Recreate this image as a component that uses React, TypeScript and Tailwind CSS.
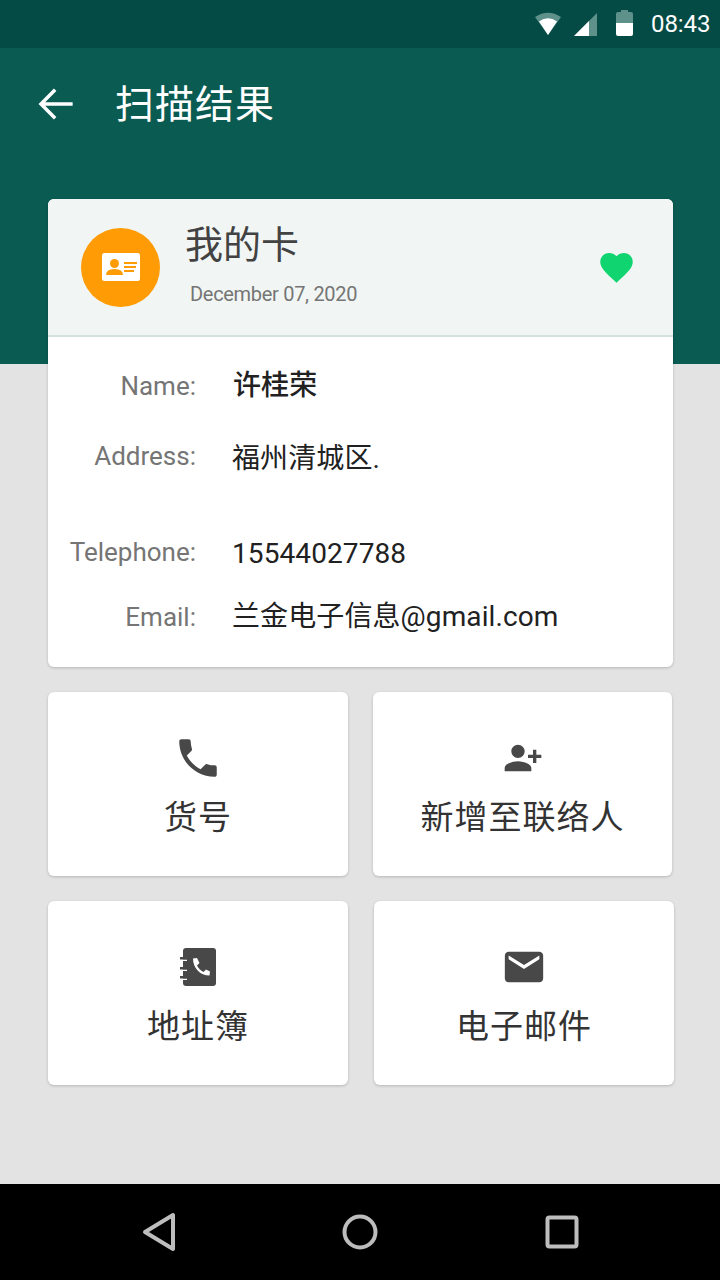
import React from "react";

const font = "font-['Roboto','Noto_Sans_CJK_SC',sans-serif]";

function ActionCard({ icon, label, className }: { icon: React.ReactNode; label: string; className: string }) {
  return (
    <div className={`flex h-[184px] shrink-0 flex-col items-center rounded-[6px] bg-white shadow-[0_1px_3px_rgba(0,0,0,0.2)] ${className}`}>
      <div className="mt-[42px] flex h-[48px] items-center justify-center">{icon}</div>
      <div className="mt-[12px] text-[33px] leading-[48px] tracking-[1px] text-[#333333]">{label}</div>
    </div>
  );
}

function Row({ label, value, className, labelClass = "", valueClass = "" }: { label: string; value: React.ReactNode; className: string; labelClass?: string; valueClass?: string }) {
  return (
    <div className={`flex items-start ${className}`}>
      <div className={`w-[148px] text-right text-[26px] leading-[36px] text-[#757575] ${labelClass}`}>{label}</div>
      <div className={`ml-[36px] text-[28px] leading-[36px] tracking-[0.1px] text-[#212121] ${valueClass}`}>{value}</div>
    </div>
  );
}

export default function App() {
  return (
    <div className={`flex h-[1280px] w-[720px] flex-col overflow-hidden bg-[#e3e3e3] ${font}`}>
      <div className="flex h-[48px] items-center bg-[#044b45] pl-[535px] text-white">
        <svg width="26" height="23" viewBox="0 0 26 23" className="mt-[-1px]"><path d="M0 5 Q13 -3.500 26 5 L13 23 Z" fill="#5f918b" /><path d="M4 9.500 Q13 3 22 9.500 L13 23 Z" fill="#fff" /></svg>
        <svg width="23" height="23" viewBox="0 0 23 23" className="ml-[13px]"><path d="M0 23 L23 0 V23 Z" fill="#5f918b" /><path d="M0 23 L15 8 V23 Z" fill="#fff" /></svg>
        <svg width="17" height="26" viewBox="0 0 17 26" className="ml-[19px] mt-[-3px]"><path d="M5 2 V0 H12 V2 H15 Q17 2 17 4 V13 H0 V4 Q0 2 2 2 Z" fill="#5f918b" /><path d="M0 13 H17 V24 Q17 26 15 26 H2 Q0 26 0 24 Z" fill="#fff" /></svg>
        <span className="ml-[18px] text-[24px] leading-none tracking-[-0.1px]">08:43</span>
      </div>
      <div className="h-[316px] bg-[#0a5b52]">
        <div className="flex h-[112px] items-center pl-[36px]">
          <svg width="40" height="40" viewBox="0 0 24 24" fill="none" stroke="#fff" strokeWidth="2.1"><path d="M22 12H3M11.500 3.500 3 12l8.500 8.500" /></svg>
          <div className="ml-[39px] mt-[2px] text-[39px] tracking-[1px] text-white">扫描结果</div>
        </div>
      </div>

      <div className="-mt-[165px] flex flex-col pl-[48px]">
        <div className="h-[468px] w-[625px] overflow-hidden rounded-[6px] bg-white shadow-[0_1px_3px_rgba(0,0,0,0.2)]">
          <div className="flex h-[138px] items-center border-b-2 border-[#d3e2dd] bg-[#f1f6f4] pl-[33px] pr-[38px]">
            <div className="flex h-[79px] w-[79px] items-center justify-center rounded-full bg-[#ff9b04]">
              <svg width="38" height="28" viewBox="0 0 38 28"><rect width="38" height="28" rx="2.500" fill="#fff" /><circle cx="12.500" cy="10.500" r="4.500" fill="#ff9b04" /><path d="M4 22 Q4 16 12.500 16 Q21 16 21 22 Z" fill="#ff9b04" /><path d="M22 9 H35 V11 H22 Z M22 13 H34 V15 H22 Z M22 17 H32 V19 H22 Z" fill="#ff9b04" /></svg>
            </div>
            <div className="ml-[25px] flex-1 mt-[-5px]">
              <div className="text-[38px] leading-[44px] text-[#424242]">我的卡</div>
              <div className="ml-[5px] mt-[15px] text-[20px] leading-[24px] tracking-[-0.3px] text-[#757575]">December 07, 2020</div>
            </div>
            <svg width="41" height="39" viewBox="0 0 24 24" fill="#10d470" className="mr-[-2px]"><path d="M12 21.350l-1.450-1.320C5.400 15.360 2 12.280 2 8.500 2 5.420 4.420 3 7.500 3c1.740 0 3.410.81 4.500 2.090C13.090 3.810 14.760 3 16.500 3 19.580 3 22 5.420 22 8.500c0 3.780-3.400 6.860-8.550 11.540L12 21.350z" /></svg>
          </div>
          <div className="flex flex-col pt-[30px]">
            <Row label="Name:" value="许桂荣" className="" labelClass="mt-[1px]" valueClass="ml-[37px] mt-[1px] font-medium" />
            <Row label="Address:" value="福州清城区." className="mt-[34px]" labelClass="" valueClass="mt-[3px]" />
            <Row label="Telephone:" value="15544027788" className="mt-[57px]" valueClass="mt-[2px]" />
            <Row label="Email:" value="兰金电子信息@gmail.com" className="mt-[26px]" labelClass="mt-[1px]" valueClass="mt-[1px]" />
          </div>
        </div>

        <div className="mt-[25px] flex gap-[25px]">
          <ActionCard className="w-[300px]" label="货号" icon={
            <svg width="50" height="50" viewBox="0 0 24 24" fill="#484848"><path d="M6.620 10.790c1.440 2.830 3.760 5.140 6.590 6.590l2.200-2.200c.27-.27.67-.36 1.020-.24 1.120.37 2.330.57 3.570.57.55 0 1 .45 1 1V20c0 .55-.45 1-1 1-9.390 0-17-7.610-17-17 0-.55.45-1 1-1h3.500c.55 0 1 .45 1 1 0 1.250.2 2.450.57 3.570.11.35.03.74-.25 1.020l-2.200 2.200z" /></svg>
          } />
          <ActionCard className="w-[299px]" label="新增至联络人" icon={
            <svg width="40" height="40" viewBox="0 0 24 24" fill="#484848"><path d="M15 12c2.210 0 4-1.790 4-4s-1.790-4-4-4-4 1.790-4 4 1.790 4 4 4zm-9-2V7H4v3H1v2h3v3h2v-3h3v-2H6zm9 4c-2.670 0-8 1.340-8 4v2h16v-2c0-2.660-5.330-4-8-4z" transform="matrix(-1 0 0 1 24 0)" /></svg>
          } />
        </div>
        <div className="mt-[25px] flex gap-[26px]">
          <ActionCard className="w-[300px]" label="地址簿" icon={
            <svg width="36" height="38" viewBox="0 0 36 38" fill="#484848">
              <rect x="3" y="0" width="33" height="38" rx="3" />
              <path d="M3 11.500 H7 V13 H3 Z M3 21.500 H7 V23 H3 Z M3 30.500 H7 V32 H3 Z" fill="#fff" />
              <path d="M0 9 H7 V11.500 H0 Z M0 19 H7 V21.500 H0 Z M0 28 H7 V30.500 H0 Z" />
              <path d="M13 10.500 L17 10 L19.500 15 L17 17.500 C18.500 20.500 20.500 22.500 23.500 24 L26 21.500 L30 23.500 L29.500 27.500 C20 27.500 13 20 13 10.500 Z" fill="#fff" />
            </svg>
          } />
          <ActionCard className="w-[300px]" label="电子邮件" icon={
            <svg width="46" height="46" viewBox="0 0 24 24" fill="#484848"><path d="M20 4H4c-1.100 0-1.990.9-1.990 2L2 18c0 1.100.9 2 2 2h16c1.100 0 2-.9 2-2V6c0-1.100-.9-2-2-2zm0 4l-8 5-8-5V6l8 5 8-5v2z" /></svg>
          } />
        </div>
      </div>

      <div className="mt-auto flex h-[96px] items-center bg-black pl-[140px]">
        <svg width="38" height="42" viewBox="0 0 38 42" fill="none" stroke="#bdbdbd" strokeWidth="4"><path d="M33 4 V38 L5 21 Z" strokeLinejoin="round" /></svg>
        <svg width="36" height="36" viewBox="0 0 36 36" fill="none" stroke="#bdbdbd" strokeWidth="4" className="ml-[164px]"><circle cx="18" cy="18" r="15.500" /></svg>
        <svg width="34" height="34" viewBox="0 0 34 34" fill="none" stroke="#bdbdbd" strokeWidth="4" className="ml-[167px]"><rect x="2.500" y="2.500" width="29" height="29" rx="2" /></svg>
      </div>
    </div>
  );
}
